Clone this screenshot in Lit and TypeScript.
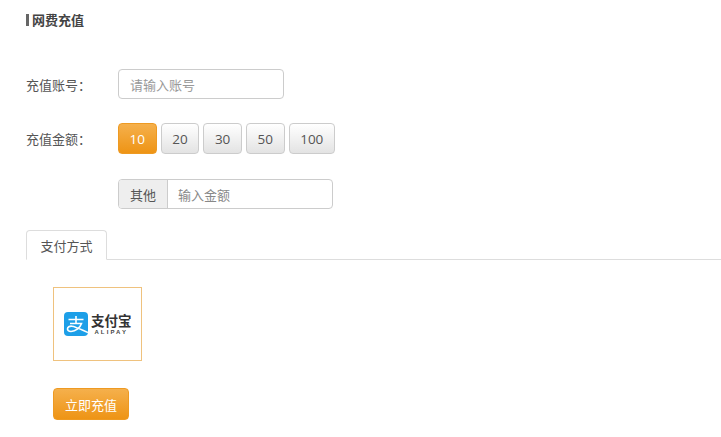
import { LitElement, html, css } from "lit";
import { customElement } from "lit/decorators.js";

@customElement("app-root")
export class AppRoot extends LitElement {
  static styles = css`
    :host {
      display: block;
      width: 721px;
      height: 437px;
      overflow: hidden;
      background: #fff;
      box-sizing: border-box;
      padding: 13px 0 0 26px;
      font-family: "Noto Sans CJK SC", sans-serif;
      font-size: 13px;
      color: #555;
    }
    * { box-sizing: border-box; }
    .title {
      display: flex;
      align-items: center;
      gap: 3px;
      height: 14px;
      font: bold 13px/14px "Noto Sans CJK SC", sans-serif;
      color: #444;
      margin-bottom: 42px;
    }
    .title i { width: 3px; height: 12px; background: #666; }
    .row { display: flex; align-items: center; }
    .label {
      width: 92px;
      font: 13px "Noto Sans CJK SC", sans-serif;
      color: #555;
    }
    .label.tight { margin-right: -4px; }
    .field {
      width: 166px;
      height: 30px;
      border: 1px solid #ccc;
      border-radius: 4px;
      padding-left: 11px;
      display: flex;
      align-items: center;
      font: 13px "Noto Sans CJK SC", sans-serif;
      color: #999;
    }
    .amounts { display: flex; gap: 4px; margin-top: 24px; }
    .amt {
      height: 31px;
      padding: 0 10.6px;
      border: 1px solid #ccc;
      border-radius: 4px;
      background: linear-gradient(#fff, #e3e3e3);
      display: flex;
      align-items: center;
      justify-content: center;
      font: 13.5px "Open Sans", sans-serif;
      color: #555;
    }
    .amt.on {
      background: linear-gradient(#f5b04c, #ee9415);
      border-color: #ee9a22;
      color: #fff;
    }
    .other {
      margin: 25px 0 0 92px;
      width: 215px;
      height: 30px;
      border: 1px solid #ccc;
      border-radius: 4px;
      display: flex;
      font: 13px "Noto Sans CJK SC", sans-serif;
    }
    .addon {
      width: 49px;
      background: #eee;
      border-right: 1px solid #ccc;
      border-radius: 3px 0 0 3px;
      display: flex;
      align-items: center;
      justify-content: center;
      color: #555;
    }
    .ph { padding-left: 10px; display: flex; align-items: center; color: #888; }
    .tabs {
      margin-top: 21px;
      border-bottom: 1px solid #ddd;
      height: 30px;
    }
    .tab {
      width: 81px;
      height: 30px;
      border: 1px solid #ddd;
      border-bottom-color: #fff;
      border-radius: 4px 4px 0 0;
      background: #fff;
      display: flex;
      align-items: center;
      justify-content: center;
      font: 13px "Noto Sans CJK SC", sans-serif;
      color: #555;
    }
    .pay {
      margin: 27px 0 0 27px;
      width: 89px;
      height: 74px;
      border: 1px solid #efc27e;
      display: flex;
      align-items: center;
      padding-left: 10px;
      gap: 3px;
    }
    .logo-text { display: flex; flex-direction: column; align-items: center; gap: 1px; }
    .zh {
      font: bold 13.5px/15px "Noto Sans CJK SC", sans-serif;
      color: #333;
    }
    .en {
      font: bold 6px/7px "Liberation Sans", sans-serif;
      letter-spacing: 2.1px;
      color: #444;
    }
    .submit {
      margin: 27px 0 0 27px;
      width: 76px;
      height: 32px;
      border-radius: 4px;
      border: 1px solid #ee9a22;
      background: linear-gradient(#f5b04c, #ee9415);
      color: #fff;
      display: flex;
      align-items: center;
      justify-content: center;
      font: 13px "Noto Sans CJK SC", sans-serif;
    }
  `;

  render() {
    const amounts = ["10", "20", "30", "50", "100"];
    return html`
      <div class="title"><i></i><span>网费充值</span></div>
      <div class="row">
        <span class="label">充值账号：</span>
        <div class="field">请输入账号</div>
      </div>
      <div class="row amounts">
        <span class="label tight">充值金额：</span>
        ${amounts.map(
          (a, i) => html`<div class="amt ${i === 0 ? "on" : ""}">${a}</div>`
        )}
      </div>
      <div class="other">
        <div class="addon">其他</div>
        <div class="ph">输入金额</div>
      </div>
      <div class="tabs"><div class="tab">支付方式</div></div>
      <div class="pay">
        <svg width="24" height="24" viewBox="0 0 24 24">
          <rect width="24" height="24" rx="4" fill="#1d9fe8" />
          <path
            d="M4.500 7.500h15M12 4v7.500M6 11.500h11.500c-1.500 4.500-6 8-10.500 8-2.500 0-3.500-1.200-3.500-2.600 0-1.900 2-3 4.500-2.700 3.500.4 8 2.800 16 6.300"
            fill="none"
            stroke="#fff"
            stroke-width="1.600"
          />
        </svg>
        <div class="logo-text">
          <span class="zh">支付宝</span>
          <span class="en">ALIPAY</span>
        </div>
      </div>
      <div class="submit">立即充值</div>
    `;
  }
}
